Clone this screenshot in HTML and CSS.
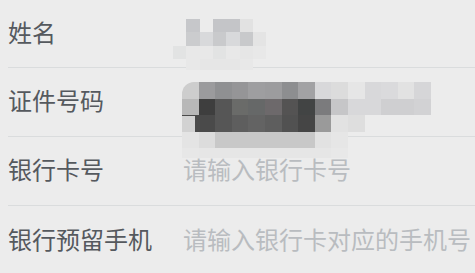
FILE: index.html
```html
<!DOCTYPE html>
<html lang="zh-CN">
<head>
<meta charset="utf-8">
<link rel="stylesheet" href="styles.css">
</head>
<body>
<div class="form">
  <div class="row first">
    <div class="label">姓名</div>
    <div class="value"></div>
  </div>
  <div class="row">
    <div class="label">证件号码</div>
    <div class="value"></div>
  </div>
  <div class="row">
    <div class="label">银行卡号</div>
    <div class="value placeholder">请输入银行卡号</div>
  </div>
  <div class="row last">
    <div class="label">银行预留手机</div>
    <div class="value placeholder">请输入银行卡对应的手机号</div>
  </div>

  <div class="mosaic m1">
    <i></i><i style="background:#c6c7ca"></i><i></i><i style="background:#c4c5c8"></i><i style="background:#c4c5c8"></i><i style="background:#e2e2e2"></i><i></i>
    <i></i><i style="background:#cbccce"></i><i style="background:#d8d9db"></i><i style="background:#c9cacc"></i><i style="background:#d8d9db"></i><i style="background:#c8c9cb"></i><i style="background:#e4e4e4"></i>
    <i style="background:#e2e3e3"></i><i style="background:#e8e8e8"></i><i style="background:#e8e8e8"></i><i style="background:#e2e3e3"></i><i style="background:#e8e8e8"></i><i style="background:#e6e6e6"></i><i style="background:#e8e8e8"></i>
    <i></i><i style="background:#e8e8e8"></i><i style="background:#e6e6e6"></i><i style="background:#e6e6e6"></i><i style="background:#e6e6e6"></i><i style="background:#e8e8e8"></i><i></i>
  </div>

  <div class="mosaic m2">
    <i class="s1"></i><i style="background:#9b9b9d"></i><i style="background:#8f9092"></i><i style="background:#959597"></i><i style="background:#9e9ea0"></i><i style="background:#9c9c9e"></i><i style="background:#8d8e90"></i><i style="background:#a2a2a4"></i><i style="background:#d8d8da"></i><i style="background:#dcdcdc"></i><i style="background:#e6e6e6"></i><i style="background:#d8d8da"></i><i style="background:#dadadc"></i><i style="background:#e2e2e2"></i><i style="background:#d6d6d8"></i>
    <i class="s2"></i><i style="background:#3e3e3e"></i><i style="background:#565656"></i><i style="background:#6a6b69"></i><i style="background:#666868"></i><i style="background:#6d696b"></i><i style="background:#545353"></i><i style="background:#424444"></i><i style="background:#7b7b7d"></i><i style="background:#c6c6c8"></i><i style="background:#d8d8da"></i><i style="background:#d8d8da"></i><i style="background:#cfcfd1"></i><i style="background:#cfcfd1"></i><i style="background:#d2d2d4"></i>
    <i class="s3"></i><i style="background:#4a4a4a"></i><i style="background:#565656"></i><i style="background:#5e5e5e"></i><i style="background:#636363"></i><i style="background:#5e5e5e"></i><i style="background:#515151"></i><i style="background:#454545"></i><i style="background:#9a9a9a"></i><i style="background:#e2e2e2"></i><i style="background:#dedede"></i><i></i><i></i><i></i><i></i>
    <i style="background:#e4e4e4"></i><i style="background:#dcdcdc"></i><i style="background:#c8c8c8"></i><i style="background:#c8c8c8"></i><i style="background:#c8c8c8"></i><i style="background:#c8c8c8"></i><i style="background:#c8c8c8"></i><i style="background:#c8c8c8"></i><i style="background:#e2e2e2"></i><i style="background:#e6e6e6"></i><i></i><i></i><i></i><i></i><i></i>
    <i style="background:#e7e7e7"></i><i style="background:#e6e6e6"></i><i style="background:#e6e6e6"></i><i style="background:#e6e6e6"></i><i style="background:#e6e6e6"></i><i style="background:#e6e6e6"></i><i style="background:#e6e6e6"></i><i style="background:#e6e6e6"></i><i style="background:#e6e6e6"></i><i style="background:#e8e8e8"></i><i></i><i></i><i></i><i></i><i></i>
  </div>
</div>
</body>
</html>
```

FILE: styles.css
```css
html, body {
  margin: 0;
  padding: 0;
  background: #ececec;
}

.form {
  position: relative;
  width: 475px;
  height: 273px;
  overflow: hidden;
  font-family: "Noto Sans CJK SC", "Noto Sans", sans-serif;
  font-size: 24px;
}

.row {
  box-sizing: border-box;
  display: flex;
  align-items: center;
  height: 69px;
  padding-bottom: 4px;
  margin-left: 8px;
  border-bottom: 1px solid #dadcdd;
}

.row.first {
  height: 68px;
}

.row.last {
  border-bottom: none;
}

.label {
  width: 175px;
  color: #55595e;
  line-height: 1;
}

.value {
  flex: 1;
  line-height: 1;
}

.placeholder {
  color: #b9bcc0;
}

.mosaic {
  position: absolute;
  display: grid;
}

.mosaic i {
  display: block;
}

.m1 {
  left: 173px;
  top: 19px;
  grid-template-columns: repeat(7, 13.33px);
  grid-template-rows: repeat(3, 13.33px) 11px;
}

.m2 {
  left: 182px;
  top: 82px;
  grid-template-columns: repeat(15, 16.6px);
  grid-template-rows: repeat(4, 16.6px) 10px;
}

.m2 .s1 {
  background: #cdcdcd;
  border-top-left-radius: 12px;
}

.m2 .s2 {
  background: #b8b8b8;
}

.m2 .s3 {
  background: #d2d2d2;
  box-shadow: inset -5px 2px 0 -1px #4a4a4a;
}
```
